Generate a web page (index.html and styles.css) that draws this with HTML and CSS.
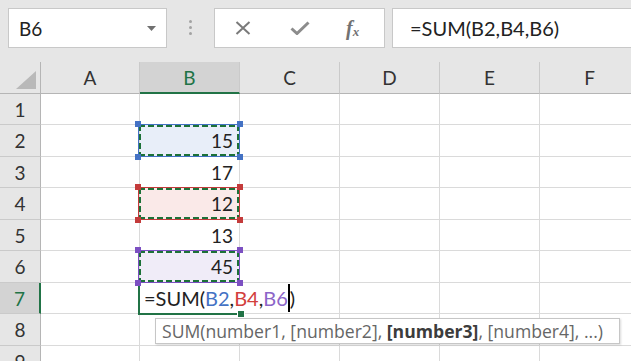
FILE: index.html
```html
<!DOCTYPE html>
<html lang="en">
<head>
    <meta charset="UTF-8">
    <meta name="viewport" content="width=device-width, initial-scale=1.0">
    <title>SUM formula</title>
    <link rel="stylesheet" href="styles.css">
</head>
<body>
    <div class="toolbar">
        <div class="namebox">
            <span>B6</span>
            <svg width="9" height="5" viewBox="0 0 9 5"><path d="M0 0H9L4.5 5Z" fill="#707070"/></svg>
        </div>
        <div class="grip"><i></i><i></i><i></i></div>
        <div class="fbuttons">
            <svg class="ico-x" width="16" height="14" viewBox="0 0 16 14"><path d="M1.5 1L14.5 13M14.5 1L1.5 13" stroke="#7a7a7a" stroke-width="2" fill="none"/></svg>
            <svg class="ico-ok" width="20" height="14" viewBox="0 0 20 14"><path d="M1.5 7.5L7 12.5L18.5 1.5" stroke="#8c8c8c" stroke-width="3" fill="none"/></svg>
            <span class="fx">f<sub>x</sub></span>
        </div>
        <div class="formula">=SUM(B2,B4,B6)</div>
    </div>

    <div class="sheet">
        <div class="c hd corner"><svg width="20" height="18" viewBox="0 0 20 18"><path d="M0 18H20V0Z" fill="#b9b9b9"/></svg></div>
        <div class="c hd">A</div>
        <div class="c hd sel">B</div>
        <div class="c hd">C</div>
        <div class="c hd">D</div>
        <div class="c hd">E</div>
        <div class="c hd">F</div>

        <div class="c rh">1</div>
        <div class="c"></div><div class="c"></div><div class="c"></div><div class="c"></div><div class="c"></div><div class="c"></div>

        <div class="c rh">2</div>
        <div class="c"></div>
        <div class="c fill-blue">15
            <div class="ref blue"><div class="ants"></div><i class="tl"></i><i class="tr"></i><i class="bl"></i><i class="br"></i></div>
        </div>
        <div class="c"></div><div class="c"></div><div class="c"></div><div class="c"></div>

        <div class="c rh">3</div>
        <div class="c"></div>
        <div class="c">17</div>
        <div class="c"></div><div class="c"></div><div class="c"></div><div class="c"></div>

        <div class="c rh">4</div>
        <div class="c"></div>
        <div class="c fill-red">12
            <div class="ref red"><div class="ants"></div><i class="tl"></i><i class="tr"></i><i class="bl"></i><i class="br"></i></div>
        </div>
        <div class="c"></div><div class="c"></div><div class="c"></div><div class="c"></div>

        <div class="c rh">5</div>
        <div class="c"></div>
        <div class="c">13</div>
        <div class="c"></div><div class="c"></div><div class="c"></div><div class="c"></div>

        <div class="c rh">6</div>
        <div class="c"></div>
        <div class="c fill-purple">45
            <div class="ref purple"><div class="ants"></div><i class="tl"></i><i class="tr"></i><i class="bl"></i><i class="br"></i></div>
        </div>
        <div class="c"></div><div class="c"></div><div class="c"></div><div class="c"></div>

        <div class="c rh rsel">7</div>
        <div class="c"></div>
        <div class="c editing">
            <span class="entry">=SUM(<span class="t-blue">B2</span>,<span class="t-red">B4</span>,<span class="t-purple">B6</span><span class="caret"></span>)</span>
            <div class="active"><i class="handle"></i></div>
        </div>
        <div class="c"></div><div class="c"></div><div class="c"></div><div class="c"></div>

        <div class="c rh">8</div>
        <div class="c"></div>
        <div class="c">
            <div class="tip"><span>SUM(number1, [number2], <b>[number3]</b>, [number4], ...)</span></div>
        </div>
        <div class="c"></div><div class="c"></div><div class="c"></div><div class="c"></div>

        <div class="c rh">9</div>
        <div class="c"></div><div class="c"></div><div class="c"></div><div class="c"></div><div class="c"></div><div class="c"></div>
    </div>
</body>
</html>
```

FILE: styles.css
```css
* {
    margin: 0;
    padding: 0;
    box-sizing: border-box;
}

body {
    width: 631px;
    height: 361px;
    overflow: hidden;
    background: #e6e6e6;
    font-family: Lato, "Liberation Sans", sans-serif;
    font-size: 19px;
    color: #222;
}

/* formula bar */
.toolbar {
    display: flex;
    height: 62px;
    padding: 8px 0 0 8px;
}

.namebox {
    width: 159px;
    height: 40px;
    background: #fff;
    border: 1px solid #c8c8c8;
    display: flex;
    align-items: center;
    justify-content: space-between;
    padding: 0 10px;
}

.grip {
    width: 47px;
    display: flex;
    flex-direction: column;
    align-items: center;
    gap: 3px;
    padding-top: 12px;
}

.grip i {
    width: 3px;
    height: 3px;
    border-radius: 50%;
    background: #a3a3a3;
}

.fbuttons {
    width: 171px;
    height: 40px;
    margin-right: 7px;
    background: #fff;
    border: 1px solid #c8c8c8;
    display: flex;
    align-items: center;
}

.ico-x {
    margin-left: 20px;
}

.ico-ok {
    margin-left: 39px;
}

.fx {
    margin-left: 36px;
    font-family: "Liberation Serif", serif;
    font-style: italic;
    font-weight: bold;
    font-size: 20px;
    color: #727272;
    line-height: 1;
}

.fx sub {
    font-size: 13px;
    vertical-align: -1px;
}

.formula {
    flex: 1;
    height: 40px;
    background: #fff;
    border: 1px solid #c8c8c8;
    border-right: none;
    padding-left: 17px;
    display: flex;
    align-items: center;
    font-size: 20px;
}

/* grid */
.sheet {
    display: grid;
    grid-template-columns: 41px 99px 100px 100px 100px 100px 100px;
    grid-template-rows: 32px 31px 32px 31px 32px 31px 32px 31px 32px 31px;
    background: #fff;
}

.c {
    position: relative;
    display: flex;
    align-items: center;
    justify-content: flex-end;
    padding-right: 6px;
    white-space: nowrap;
    border-right: 1px solid #dadada;
    border-bottom: 1px solid #dadada;
}

.hd {
    background: #e6e6e6;
    justify-content: center;
    padding: 0;
    color: #333;
    border-right: 1px solid #cacaca;
    border-bottom: 1px solid #b5b5b5;
}

.corner {
    justify-content: flex-end;
    align-items: flex-end;
    padding: 0 4px 4px 0;
    border-right-color: #b5b5b5;
}

.rh {
    background: #e6e6e6;
    justify-content: center;
    padding: 0;
    color: #333;
    border-right: 1px solid #b5b5b5;
    border-bottom: 1px solid #cacaca;
}

.sel {
    background: #d3d3d3;
    color: #217346;
    border-bottom: 2px solid #217346;
}

.rsel {
    background: #d3d3d3;
    color: #217346;
    border-right: 2px solid #217346;
}

/* reference highlights */
.fill-blue { background: #e8eef9; }
.fill-red { background: #fae9e8; }
.fill-purple { background: #f0ecf8; }

.ref {
    position: absolute;
    left: -2px;
    top: -1px;
    right: -1px;
    bottom: -1px;
    border: 1px solid currentColor;
    z-index: 2;
}

.blue { color: #4472c4; }
.red { color: #c43b3b; }
.purple { color: #7c50c2; }

.ants {
    position: absolute;
    inset: 0;
    background:
        repeating-linear-gradient(90deg, #1c7138 0 6px, transparent 6px 9px) left top / 100% 2px no-repeat,
        repeating-linear-gradient(90deg, #1c7138 0 6px, transparent 6px 9px) left bottom / 100% 2px no-repeat,
        repeating-linear-gradient(180deg, #1c7138 0 6px, transparent 6px 9px) left top / 2px 100% no-repeat,
        repeating-linear-gradient(180deg, #1c7138 0 6px, transparent 6px 9px) right top / 2px 100% no-repeat;
}

.ref i {
    position: absolute;
    width: 6px;
    height: 6px;
    background: currentColor;
}

.ref .tl { left: -4px; top: -4px; }
.ref .tr { right: -4px; top: -4px; }
.ref .bl { left: -4px; bottom: -4px; }
.ref .br { right: -4px; bottom: -4px; }

/* cell being edited */
.editing {
    justify-content: flex-start;
    padding: 0 0 0 4px;
    border-right: none;
    overflow: visible;
    font-size: 20px;
}

.entry {
    position: relative;
    z-index: 3;
    display: flex;
    align-items: center;
}

.t-blue { color: #4472c4; }
.t-red { color: #d2403c; }
.t-purple { color: #8c65c8; }

.caret {
    display: inline-block;
    width: 2px;
    height: 28px;
    background: #000;
}

.active {
    position: absolute;
    left: -2px;
    top: -1px;
    right: -1px;
    bottom: -2px;
    border-left: 2px solid #217346;
    border-bottom: 2px solid #217346;
    z-index: 1;
}

.handle {
    position: absolute;
    right: -4px;
    bottom: -5px;
    width: 8px;
    height: 8px;
    background: #217346;
    border: 1px solid #fff;
}

/* function tooltip */
.tip {
    position: absolute;
    left: 15px;
    top: 4px;
    width: 465px;
    height: 26px;
    z-index: 5;
    background: #fff;
    border: 1px solid #c6c6c6;
    box-shadow: 1px 1px 2px rgba(0, 0, 0, .15);
    font-family: "Open Sans", "Noto Sans", sans-serif;
    font-size: 17.6px;
    color: #666;
    padding-left: 6px;
    display: flex;
    align-items: center;
}

.tip b {
    color: #3c3c3c;
}
```
